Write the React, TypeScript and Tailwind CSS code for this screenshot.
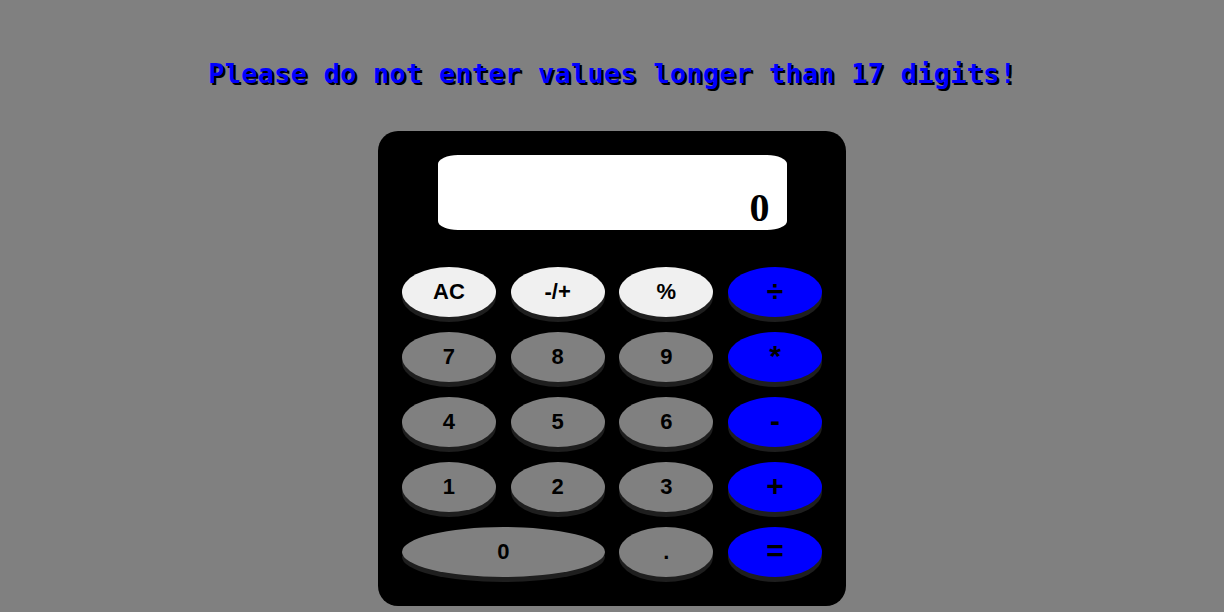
import React from "react";

type Btn = { label: string; kind: "light" | "gray" | "blue"; wide?: boolean };

const buttons: Btn[] = [
  { label: "AC", kind: "light" },
  { label: "-/+", kind: "light" },
  { label: "%", kind: "light" },
  { label: "÷", kind: "blue" },
  { label: "7", kind: "gray" },
  { label: "8", kind: "gray" },
  { label: "9", kind: "gray" },
  { label: "*", kind: "blue" },
  { label: "4", kind: "gray" },
  { label: "5", kind: "gray" },
  { label: "6", kind: "gray" },
  { label: "-", kind: "blue" },
  { label: "1", kind: "gray" },
  { label: "2", kind: "gray" },
  { label: "3", kind: "gray" },
  { label: "+", kind: "blue" },
  { label: "0", kind: "gray", wide: true },
  { label: ".", kind: "gray" },
  { label: "=", kind: "blue" },
];

const kindClass = {
  light: "bg-[#f0f0f0] text-[22px]",
  gray: "bg-[#808080] text-[22px]",
  blue: "bg-[#0000ff] text-[30px] pb-[3px]",
};

export default function App() {
  return (
    <div className="min-h-[612px] w-full bg-[#808080] flex flex-col items-center">
      <h1
        className="mt-[52px] text-[27.4px] leading-[44px] font-bold text-[#0000ff] [text-shadow:2px_2px_0_#000] [font-family:'DejaVu_Sans_Mono',monospace]"
      >
        Please do not enter values longer than 17 digits!
      </h1>
      <div className="mt-[35px] w-[468px] h-[475px] bg-black rounded-[20px] pl-[24px] pr-[24px] pt-[24px] flex flex-col items-center">
        <div className="w-[349px] h-[75px] bg-white rounded-[20px/9px] flex items-end justify-end pr-[17px]">
          <span className="text-[40px] leading-[44px] font-bold text-black [font-family:'Liberation_Serif',serif]">
            0
          </span>
        </div>
        <div className="mt-[37px] grid grid-cols-[repeat(4,94px)] gap-x-[14.7px] gap-y-[15px]">
          {buttons.map((b) => (
            <div
              key={b.label}
              className={`h-[50px] rounded-[50%] shadow-[0_5px_0_#1e1e1e] flex items-center justify-center text-black font-bold leading-none [font-family:'Liberation_Sans',Arial,sans-serif] ${kindClass[b.kind]} ${b.wide ? "col-span-2" : ""}`}
            >
              {b.label}
            </div>
          ))}
        </div>
      </div>
    </div>
  );
}
